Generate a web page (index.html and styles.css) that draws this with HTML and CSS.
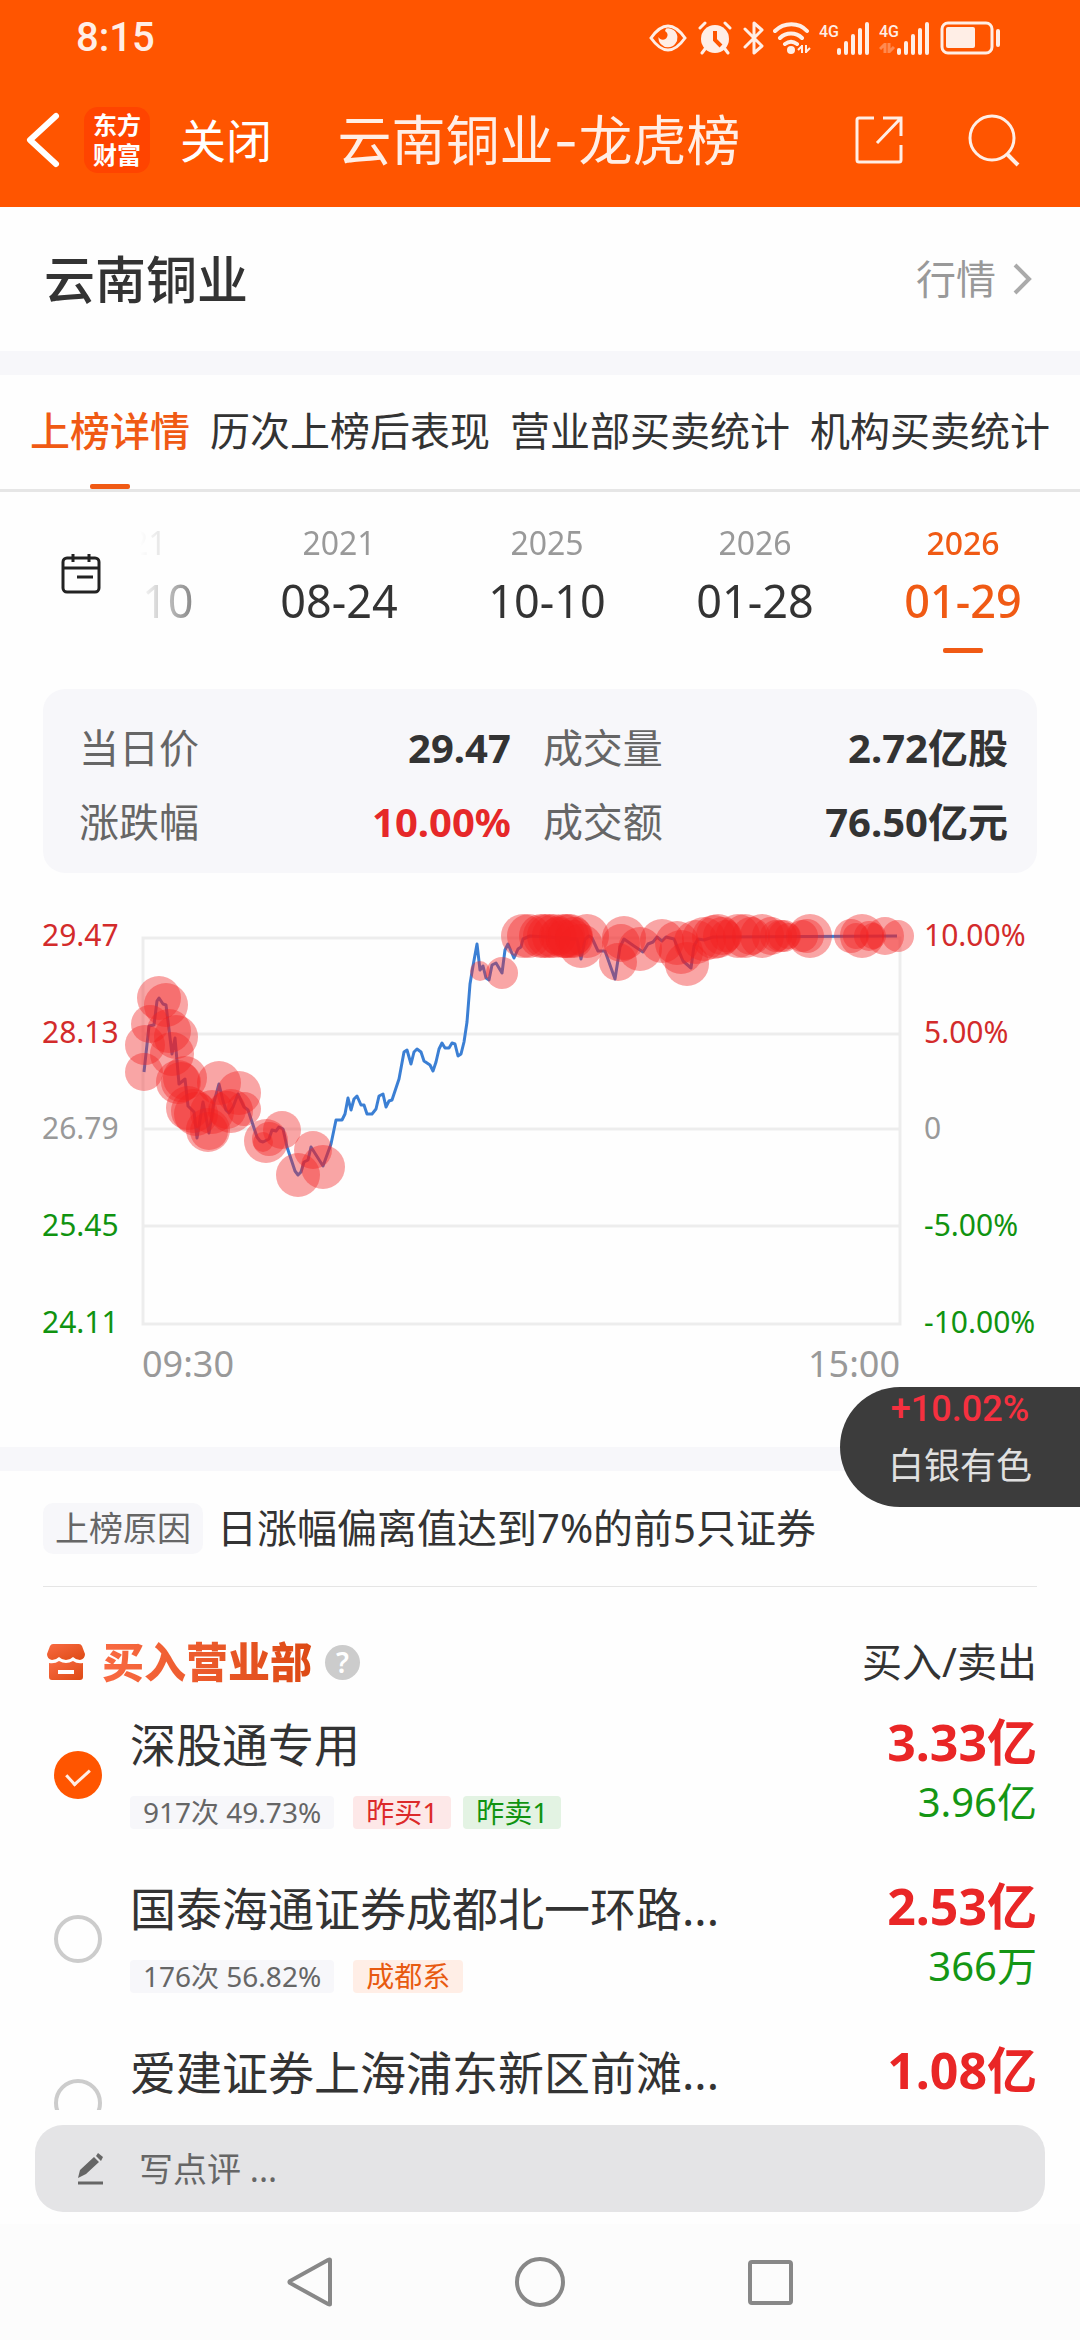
FILE: index.html
```html
<!DOCTYPE html>
<html lang="zh-CN">
<head>
  <meta charset="UTF-8">
  <meta name="viewport" content="width=device-width">
  <title>云南铜业-龙虎榜</title>
  <link rel="stylesheet" href="styles.css">
</head>
<body>

  <!-- Header -->
  <header class="header">
    <div class="status-bar">
      <span class="clock">8:15</span>
      <div class="status-icons">
        <svg width="38" height="34" viewBox="0 0 38 34">
          <path d="M2 17C9 7 14 5 19 5s10 2 17 12c-7 10-12 12-17 12S9 27 2 17z" fill="none" stroke="#ffeee6" stroke-width="3"/>
          <path d="M17 7.500a9.500 9.500 0 1 1-7.500 8.500c1 3 7 4 8.500 0 1.500-3-.5-5-2-6z" fill="#ffeee6"/>
        </svg>
        <svg class="alarm" width="34" height="34" viewBox="0 0 34 34">
          <circle cx="17" cy="18" r="14" fill="#ffeee6"/>
          <path d="M2 7l5-5M32 7l-5-5M7 28l-3 4M27 28l3 4" stroke="#ffeee6" stroke-width="3" stroke-linecap="round"/>
          <path d="M17 10v9l6 6" fill="none" stroke="#f50" stroke-width="4"/>
        </svg>
        <svg class="bluetooth" width="22" height="36" viewBox="0 0 22 36">
          <path d="M2 9l17 17-8 7V3l8 7L2 27" fill="none" stroke="#ffeee6" stroke-width="3" stroke-linejoin="round" stroke-linecap="round"/>
        </svg>
        <svg class="wifi" width="38" height="34" viewBox="0 0 38 34">
          <path d="M2 10c9-9 24-9 32 0M7 17c6-6 16-6 22 0M12 23c4-3 8-3 12 0" fill="none" stroke="#ffeee6" stroke-width="4" stroke-linecap="round"/>
          <circle cx="18" cy="29" r="4" fill="#ffeee6"/>
          <path d="M29 24v8M29 25l-4 4M33 24v8M33 31l4-4" stroke="#ffeee6" stroke-width="2"/>
        </svg>
        <svg class="signal" width="52" height="34" viewBox="0 0 52 34">
          <text x="0" y="16">4G</text>
          <path d="M20 29v3M27 22v10M34 15v17M41 9v23M48 3v29" stroke="#ffeee6" stroke-width="4" stroke-linecap="round"/>
        </svg>
        <svg class="signal" width="52" height="34" viewBox="0 0 52 34">
          <text x="0" y="16">4G</text>
          <path d="M6 22v10M6 23l-5 5M10 22v10M10 31l5-5" stroke="#ff8a50" stroke-width="3"/>
          <path d="M20 29v3M27 22v10M34 15v17M41 9v23M48 3v29" stroke="#ffeee6" stroke-width="4" stroke-linecap="round"/>
        </svg>
        <svg width="62" height="34" viewBox="0 0 62 34">
          <rect x="3" y="2" width="50" height="30" rx="6" fill="none" stroke="#ffeee6" stroke-width="3"/>
          <rect x="7" y="6" width="29" height="21" rx="2" fill="#ffeee6"/>
          <path d="M59 10v14" stroke="#ffeee6" stroke-width="4" stroke-linecap="round"/>
        </svg>
      </div>
    </div>

    <div class="title-bar">
      <button class="icon-btn" aria-label="返回">
        <svg width="36" height="60" viewBox="0 0 36 60">
          <path d="M31 6L5 30l26 24" fill="none" stroke="#fff" stroke-width="6" stroke-linecap="round" stroke-linejoin="round"/>
        </svg>
      </button>
      <div class="logo">东方<br>财富</div>
      <button class="close-btn">关闭</button>
      <h1>云南铜业-龙虎榜</h1>
      <button class="icon-btn share-btn" aria-label="分享">
        <svg width="50" height="50" viewBox="0 0 50 50">
          <path d="M20 3H5q-2 0-2 2v40q0 2 2 2h40q2 0 2-2V30M29 3h18v18M46 4L23 28" fill="none" stroke="#ffeee6" stroke-width="3"/>
        </svg>
      </button>
      <button class="icon-btn" aria-label="搜索">
        <svg width="52" height="54" viewBox="0 0 52 54">
          <circle cx="24" cy="25" r="22" fill="none" stroke="#ffeee6" stroke-width="3"/>
          <path d="M39 41l11 11" stroke="#ffeee6" stroke-width="4"/>
        </svg>
      </button>
    </div>
  </header>

  <!-- Main Content -->
  <main class="content">
    <section class="stock">
      <h2>云南铜业</h2>
      <a href="#quote" class="quote-link">行情
        <svg width="20" height="34" viewBox="0 0 20 34">
          <path d="M3 3l14 14L3 31" fill="none" stroke="#aaa" stroke-width="4"/>
        </svg>
      </a>
    </section>

    <nav class="tabs">
      <a href="#detail" class="active">上榜详情</a>
      <a href="#history">历次上榜后表现</a>
      <a href="#branch">营业部买卖统计</a>
      <a href="#org">机构买卖统计</a>
    </nav>

    <section class="dates">
      <button class="icon-btn calendar" aria-label="选择日期">
        <svg width="42" height="42" viewBox="0 0 42 42">
          <rect x="3" y="5" width="36" height="34" rx="4" fill="none" stroke="#222" stroke-width="3"/>
          <path d="M3 15h36M17 24h16M13 1v8M29 1v8" stroke="#222" stroke-width="3"/>
        </svg>
      </button>
      <div class="date-list">
        <button class="date past"><span>21</span><b>10</b></button>
        <button class="date"><span>2021</span><b>08-24</b></button>
        <button class="date"><span>2025</span><b>10-10</b></button>
        <button class="date"><span>2026</span><b>01-28</b></button>
        <button class="date active"><span>2026</span><b>01-29</b></button>
      </div>
    </section>

    <dl class="summary">
      <div><dt>当日价</dt><dd>29.47</dd></div>
      <div><dt>成交量</dt><dd>2.72亿股</dd></div>
      <div><dt>涨跌幅</dt><dd class="up">10.00%</dd></div>
      <div><dt>成交额</dt><dd>76.50亿元</dd></div>
    </dl>

    <section class="chart">
      <svg viewBox="0 0 1080 520" role="img" aria-label="分时走势">
        <path class="grid" d="M143 49H900V435H143zM143 145H900M143 240H900M143 337H900"/>
        <g class="axis">
          <text class="up" x="42" y="57">29.47</text>
          <text class="up" x="42" y="154">28.13</text>
          <text x="42" y="250">26.79</text>
          <text class="down" x="42" y="347">25.45</text>
          <text class="down" x="42" y="444">24.11</text>
          <text class="up" x="924" y="57">10.00%</text>
          <text class="up" x="924" y="154">5.00%</text>
          <text x="924" y="250">0</text>
          <text class="down" x="924" y="347">-5.00%</text>
          <text class="down" x="924" y="444">-10.00%</text>
          <text class="time" x="142" y="488">09:30</text>
          <text class="time" x="900" y="488" text-anchor="end">15:00</text>
        </g>
        <polyline class="price" points="144,183 149,137 154,136 157,112 159,109 163,115 166,116 172,165 175,149 179,195 185,190 188,217 194,223 197,249 203,213 209,244 214,213 219,195 223,212 226,221 229,224 233,218 238,205 244,218 248,221 257,248 260,252 263,253 269,250 272,241 276,242 279,238 283,240 287,258 295,282 298,286 301,283 304,273 308,271 311,258 323,277 327,266 331,255 336,231 342,231 345,225 348,209 351,221 354,210 357,207 361,216 364,216 367,225 372,225 376,220 379,207 383,205 386,218 389,212 392,211 399,190 404,163 407,161 411,175 414,163 417,160 421,163 424,172 430,176 433,182 436,173 439,160 442,154 445,159 449,159 452,154 455,155 458,167 461,165 464,153 467,133 470,95 473,77 477,55 480,81 483,77 486,89 489,91 492,76 496,74 502,84 505,61 508,55 514,69 518,60 521,58 523,50 530,47 577,50 581,70 585,50 589,47 592,49 598,62 605,62 615,90 620,58 624,50 634,57 643,63 648,55 653,53 657,48 662,52 666,48 674,50 683,72 691,79 694,57 698,50 704,51 713,48 897,47"/>
        <g class="trades" id="trades"></g>
      </svg>
      <a href="#601212" class="ticker"><b>+10.02%</b><span>白银有色</span></a>
    </section>

    <section class="reason">
      <span class="reason-tag">上榜原因</span>
      <p>日涨幅偏离值达到7%的前5只证券</p>
    </section>

    <section class="branches">
      <div class="branch-head">
        <svg width="40" height="38" viewBox="0 0 40 38">
          <defs>
            <linearGradient id="shop" x1="0" y1="0" x2="1" y2="1">
              <stop offset="0" stop-color="#f96a42"/>
              <stop offset="1" stop-color="#dd4a14"/>
            </linearGradient>
          </defs>
          <path d="M7 1h26q2 0 3 2l3 8q0 5-5 6-4 0-7-3-3 3-7 3t-7-3q-3 3-7 3-5-1-5-6l3-8q1-2 3-2z" fill="url(#shop)"/>
          <path d="M3 20q6 1 10-2 7 4 14 0 4 3 10 2v14q0 3-3 3H6q-3 0-3-3zM12 27v4h16v-4z" fill="url(#shop)" fill-rule="evenodd"/>
        </svg>
        <h3>买入营业部</h3>
        <button class="help" aria-label="说明">?</button>
        <span class="branch-cols">买入/卖出</span>
      </div>

      <div class="branch">
        <input type="radio" name="branch" id="branch1" checked>
        <label for="branch1">
          <span class="name">深股通专用</span>
          <span class="tags"><i class="count">917次 49.73%</i><i class="red">昨买1</i><i class="green">昨卖1</i></span>
        </label>
        <div class="amount"><b>3.33亿</b><span>3.96亿</span></div>
      </div>
      <div class="branch">
        <input type="radio" name="branch" id="branch2">
        <label for="branch2">
          <span class="name">国泰海通证券成都北一环路...</span>
          <span class="tags"><i class="count">176次 56.82%</i><i class="orange">成都系</i></span>
        </label>
        <div class="amount"><b>2.53亿</b><span>366万</span></div>
      </div>
      <div class="branch">
        <input type="radio" name="branch" id="branch3">
        <label for="branch3">
          <span class="name">爱建证券上海浦东新区前滩...</span>
        </label>
        <div class="amount"><b>1.08亿</b></div>
      </div>
    </section>
  </main>

  <!-- Comment box -->
  <div class="comment-bar">
    <label class="comment-box">
      <svg width="28" height="34" viewBox="0 0 28 34">
        <path d="M1 26l2-8L17 5l5 5L9 22zM19 4l2-3 5 4-2 4z" fill="#666"/>
        <path d="M1 31h25" stroke="#666" stroke-width="3"/>
      </svg>
      <input type="text" placeholder="写点评 ..." aria-label="写点评">
    </label>
  </div>

  <!-- System navigation -->
  <footer class="sys-nav">
    <button class="icon-btn" aria-label="后退">
      <svg width="50" height="54" viewBox="0 0 50 54"><path d="M45 5v44q0 1-2 0L5 28q-1-1 0-2L43 5q2-1 2 0z" fill="none" stroke="#888" stroke-width="4"/></svg>
    </button>
    <button class="icon-btn" aria-label="主页">
      <svg width="54" height="54" viewBox="0 0 54 54"><circle cx="27" cy="27" r="23" fill="none" stroke="#888" stroke-width="4"/></svg>
    </button>
    <button class="icon-btn" aria-label="最近任务">
      <svg width="50" height="54" viewBox="0 0 50 54"><rect x="5" y="7" width="41" height="41" rx="2" fill="none" stroke="#888" stroke-width="4"/></svg>
    </button>
  </footer>

  <script>
  // large trades: x, y, radius
  const trades = [
    [159,109,22],[166,116,22],[150,135,19],[145,156,20],[144,183,19],[169,142,22],[176,148,22],
    [172,165,22],[178,193,22],[181,193,20],[185,189,22],[188,219,22],[193,222,22],[196,225,22],
    [208,241,22],[209,242,19],[212,223,22],[219,194,22],[227,221,19],[231,222,22],[239,204,22],
    [244,220,17],[266,252,22],[263,253,10],[269,250,17],[282,241,19],[298,286,22],[313,261,19],
    [323,278,22],[480,82,10],[502,84,16],[523,47,22],[529,47,22],[541,47,22],[545,47,22],
    [549,47,22],[554,47,22],[558,47,19],[563,47,22],[567,47,22],[570,47,22],[574,47,19],
    [587,47,22],[565,50,19],[574,50,19],[581,57,22],[624,49,22],[621,54,19],[618,73,19],
    [640,60,22],[662,52,22],[677,54,22],[681,63,22],[687,75,22],[696,53,22],[704,50,22],
    [714,48,22],[718,47,22],[722,47,19],[726,47,16],[738,47,22],[745,47,22],[751,47,19],
    [762,47,22],[771,47,19],[776,47,16],[781,47,16],[784,47,16],[788,47,13],[810,47,22],
    [807,47,17],[802,47,16],[851,47,17],[856,47,13],[862,47,22],[869,47,15],[873,47,13],
    [885,47,19],[898,47,16]
  ];
  document.getElementById('trades').innerHTML =
    trades.map(([x, y, r]) => `<circle cx="${x}" cy="${y}" r="${r}"/>`).join('');
  </script>
</body>
</html>
```
FILE: styles.css
```css
* {
  box-sizing: border-box;
}

body {
  margin: 0;
  height: 100vh;
  overflow: hidden;
  display: flex;
  flex-direction: column;
  background: #fefefe;
  color: #333;
  font-family: "Noto Sans", "Noto Sans CJK SC", sans-serif;
  font-size: 40px;
  line-height: 60px;
}

h1, h2, h3, p, dl, dd {
  margin: 0;
}

a {
  color: inherit;
  text-decoration: none;
}

button {
  padding: 0;
  border: none;
  background: none;
  color: inherit;
  font: inherit;
}

svg {
  display: block;
}

.icon-btn {
  flex-shrink: 0;
}

/* header */
.header {
  flex-shrink: 0;
  background: #ff5500;
  color: #ffeee6;
}

.status-bar {
  height: 72px;
  padding: 4px 79px 0 76px;
  display: flex;
  justify-content: space-between;
  align-items: center;
}

.clock {
  font-family: Roboto, sans-serif;
  font-weight: 500;
}

.status-icons {
  display: flex;
  align-items: center;
  gap: 8px;
}

.alarm, .bluetooth {
  margin-left: 3px;
}

.signal text {
  fill: #ffeee6;
  font: 500 16px Roboto, sans-serif;
}

.title-bar {
  height: 135px;
  padding: 0 60px 0 25px;
  display: flex;
  align-items: center;
}

.logo {
  width: 66px;
  height: 66px;
  margin: 0 30px 0 23px;
  border-radius: 14px;
  background: #ff4400;
  color: #fff;
  font-family: "Noto Sans CJK SC", sans-serif;
  font-size: 24px;
  font-weight: 700;
  line-height: 30px;
  padding-top: 2px;
  text-align: center;
}

.close-btn {
  color: #fff;
  font-size: 46px;
}

.title-bar h1 {
  flex: 1;
  padding-top: 5px;
  font-family: Inter, "Noto Sans CJK SC", sans-serif;
  font-size: 54px;
  font-weight: 400;
  text-align: center;
  white-space: nowrap;
}

.share-btn {
  margin: 0 64px 0 48px;
}

/* stock name */
.content {
  flex: 1;
  min-height: 0;
  overflow: hidden;
}

.stock {
  padding: 42px 48px 42px 44px;
  display: flex;
  justify-content: space-between;
  align-items: center;
  border-bottom: 24px solid #f7f7fa;
}

.stock h2 {
  font-size: 51px;
  font-weight: 500;
}

.quote-link {
  color: #999;
  display: flex;
  align-items: center;
  gap: 16px;
}

/* tabs */
.tabs {
  height: 117px;
  padding: 0 30px;
  display: flex;
  justify-content: space-between;
  border-bottom: 3px solid #e6e6e6;
  white-space: nowrap;
}

.tabs a {
  display: flex;
  flex-direction: column;
  justify-content: space-between;
  align-items: center;
  padding-top: 26px;
}

.tabs .active {
  color: #f05a14;
  font-weight: 500;
}

.tabs .active::after,
.date.active::after {
  content: "";
  width: 40px;
  height: 5px;
  border-radius: 2px;
  background: #f05a14;
}

/* dates */
.dates {
  height: 197px;
  padding-right: 13px;
  display: flex;
}

.calendar {
  width: 130px;
  padding-left: 60px;
  padding-bottom: 34px;
}

.date-list {
  flex: 1;
  min-width: 0;
  overflow: hidden;
  display: flex;
  justify-content: flex-end;
  -webkit-mask-image: linear-gradient(to right, transparent 10px, #000 100px);
  mask-image: linear-gradient(to right, transparent 10px, #000 100px);
}

.date {
  flex: 0 0 208px;
  padding-top: 30px;
  display: flex;
  flex-direction: column;
  align-items: center;
}

.date span {
  color: #999;
  font-size: 32px;
  line-height: 42px;
}

.date b {
  font-size: 45px;
  font-weight: 400;
  line-height: 74px;
}

.date.past {
  flex: 1 1 0;
  align-items: flex-start;
}

.date.past b {
  padding-left: 12px;
}

.date.active,
.date.active span {
  color: #f05a14;
  font-weight: 500;
}

.date.active b {
  font-weight: 500;
}

.date.active::after {
  margin-top: 10px;
}

/* summary card */
.summary {
  margin: 0 43px;
  padding: 22px 29px 14px 36px;
  border-radius: 22px;
  background: #f7f7fa;
  display: grid;
  grid-template-columns: 13fr 14fr;
  column-gap: 32px;
}

.summary div {
  display: flex;
  justify-content: space-between;
  line-height: 74px;
}

.summary dt {
  color: #666;
}

.summary dd {
  font-weight: 700;
}

.summary .up {
  color: #e62829;
}

/* chart */
.chart {
  position: relative;
  padding-top: 16px;
  padding-bottom: 38px;
  border-bottom: 24px solid #f7f7fa;
}

.grid {
  fill: none;
  stroke: #ededed;
  stroke-width: 3;
}

.axis text {
  fill: #999;
  font-size: 30px;
}

.axis .up {
  fill: #d32b2b;
}

.axis .down {
  fill: #109310;
}

.axis .time {
  font-size: 36px;
}

.price {
  fill: none;
  stroke: #3b7fd4;
  stroke-width: 3;
  stroke-linejoin: round;
}

.trades circle {
  fill: #f32020;
  fill-opacity: 0.4;
}

.ticker {
  position: absolute;
  right: 0;
  bottom: -60px;
  width: 240px;
  height: 120px;
  border-radius: 60px 0 0 60px;
  background: #3c3c3c;
  color: #e0e0e0;
  font-size: 36px;
  display: flex;
  flex-direction: column;
  align-items: center;
}

.ticker b {
  color: #f5303f;
  font-family: Roboto, sans-serif;
  font-weight: 500;
  line-height: 44px;
}

.ticker span {
  line-height: 70px;
}

/* reason */
.reason {
  margin: 0 43px;
  padding: 27px 0 28px;
  border-bottom: 1px solid #e5e5e5;
  display: flex;
  align-items: center;
  gap: 14px;
}

.reason-tag {
  padding: 0 12px;
  border-radius: 10px;
  background: #f7f7fa;
  color: #666;
  font-size: 34px;
  line-height: 51px;
}

/* branches */
.branches {
  padding: 45px 43px 0;
}

.branch-head {
  display: flex;
  align-items: center;
  padding-left: 3px;
}

.branch-head h3 {
  margin: 0 13px 0 16px;
  font-size: 42px;
  font-weight: 900;
  background: linear-gradient(to right, #f96a42, #dd4a14);
  -webkit-background-clip: text;
  background-clip: text;
  color: transparent;
}

.help {
  width: 35px;
  height: 35px;
  border-radius: 50%;
  background: #ccc;
  color: #fff;
  font-size: 28px;
  font-weight: 600;
  line-height: 35px;
}

.branch-cols {
  margin-left: auto;
}

.branch {
  height: 164px;
  padding: 20px 0 0 11px;
  display: flex;
  align-items: flex-start;
}

.branch input {
  appearance: none;
  flex-shrink: 0;
  width: 48px;
  height: 48px;
  margin: 39px 28px 0 0;
  border: 4px solid #ccc;
  border-radius: 50%;
  display: flex;
  justify-content: center;
}

.branch input:checked {
  border: none;
  background: #ff5500;
}

.branch input:checked::before {
  content: "";
  width: 11px;
  height: 19px;
  margin-top: 12px;
  border: solid #ffeee6;
  border-width: 0 3px 3px 0;
  transform: rotate(48deg);
}

.branch label {
  flex: 1;
  min-width: 0;
}

.name {
  display: block;
  font-size: 46px;
  line-height: 64px;
}

.tags {
  display: flex;
  gap: 12px;
  margin-top: 20px;
}

.tags i {
  padding: 0 13px;
  border-radius: 4px;
  font-size: 28px;
  font-style: normal;
  line-height: 33px;
}

.tags .count {
  margin-right: 7px;
  background: #f7f7fa;
  color: #666;
}

.tags .red {
  background: #fde8e8;
  color: #dc2a2a;
}

.tags .green {
  background: #e3f3e3;
  color: #109310;
}

.tags .orange {
  background: #ffeee6;
  color: #e85a10;
}

.amount {
  display: flex;
  flex-direction: column;
  align-items: flex-end;
}

.amount b {
  color: #e92626;
  font-size: 50px;
}

.amount span {
  color: #149614;
}

/* comment box */
.comment-bar {
  flex-shrink: 0;
  padding: 15px 35px 12px;
}

.comment-box {
  height: 87px;
  padding: 0 42px;
  border-radius: 28px;
  background: #e4e4e6;
  display: flex;
  align-items: center;
  gap: 32px;
}

.comment-box input {
  flex: 1;
  border: none;
  outline: none;
  background: none;
  font: inherit;
  font-size: 34px;
}

.comment-box input::placeholder {
  color: #666;
}

.sys-nav {
  flex-shrink: 0;
  height: 116px;
  padding: 0 285px;
  background: #fcfcfc;
  display: flex;
  justify-content: space-between;
  align-items: center;
}
```
